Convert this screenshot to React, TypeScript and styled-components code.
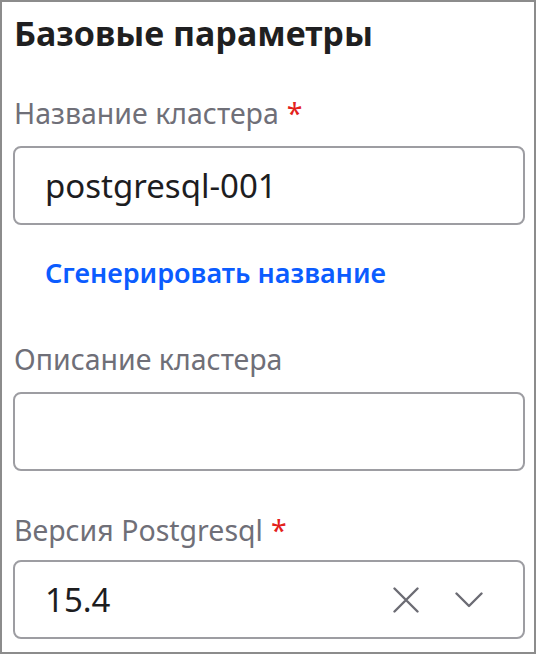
import React from "react";
import styled, { createGlobalStyle } from "styled-components";

const Global = createGlobalStyle`
  html, body { margin: 0; padding: 0; background: #ffffff; }
  body { font-family: "Noto Sans", "Open Sans", sans-serif; }
  * { box-sizing: border-box; }
`;

const Frame = styled.div`
  width: 536px;
  height: 654px;
  border: 2px solid #8c8c8c;
  padding: 9px 9px 0 11px;
  display: flex;
  flex-direction: column;
  overflow: hidden;
  background: #fff;
`;

const Title = styled.h2`
  margin: 0;
  font-size: 34px;
  line-height: 44px;
  font-weight: 700;
  color: #1f1f21;
  padding-left: 1px;
`;

const Field = styled.div<{ $top: number; $gap?: number }>`
  display: flex;
  flex-direction: column;
  gap: ${(p) => p.$gap ?? 15}px;
  margin-top: ${(p) => p.$top}px;
`;

const Label = styled.label`
  font-size: 28.5px;
  line-height: 36px;
  color: #6f6f78;
  padding-left: 1px;
  white-space: nowrap;
`;

const Required = styled.span`
  color: #e3211b;
  margin-left: 8px;
`;

const Box = styled.div`
  height: 79px;
  border: 2px solid #9d9da2;
  border-radius: 8px;
  display: flex;
  align-items: center;
  padding: 0 40px 0 30px;
  font-size: 33px;
  color: #1d1d1f;
`;

const Value = styled.span`
  flex: 1;
`;

const IconButton = styled.span`
  display: flex;
  align-items: center;
  justify-content: center;
  color: #6c6c74;
`;

const Icons = styled.div`
  display: flex;
  align-items: center;
  gap: 36px;
`;

const Link = styled.a`
  margin-top: 30px;
  padding-left: 32px;
  font-size: 27px;
  line-height: 36px;
  font-weight: 600;
  color: #0b5cff;
  text-decoration: none;
  white-space: nowrap;
`;

export default function App() {
  return (
    <>
      <Global />
      <Frame>
        <Title>Базовые параметры</Title>
        <Field $top={40}>
          <Label>
            Название кластера<Required>*</Required>
          </Label>
          <Box>
            <Value>postgresql-001</Value>
          </Box>
        </Field>
        <Link>Сгенерировать название</Link>
        <Field $top={50}>
          <Label>Описание кластера</Label>
          <Box />
        </Field>
        <Field $top={41} $gap={12}>
          <Label>
            Версия Postgresql<Required>*</Required>
          </Label>
          <Box>
            <Value>15.4</Value>
            <Icons>
              <IconButton>
                <svg width="26" height="26" viewBox="0 0 26 26" fill="none" stroke="currentColor" strokeWidth="2.4" strokeLinecap="round">
                  <path d="M1.5 1.5 L24.5 24.5 M24.5 1.5 L1.5 24.5" />
                </svg>
              </IconButton>
              <IconButton>
                <svg width="28" height="16" viewBox="0 0 28 16" fill="none" stroke="currentColor" strokeWidth="2.4" strokeLinecap="round" strokeLinejoin="round">
                  <path d="M1.5 1.5 L14 14 L26.5 1.5" />
                </svg>
              </IconButton>
            </Icons>
          </Box>
        </Field>
      </Frame>
    </>
  );
}
